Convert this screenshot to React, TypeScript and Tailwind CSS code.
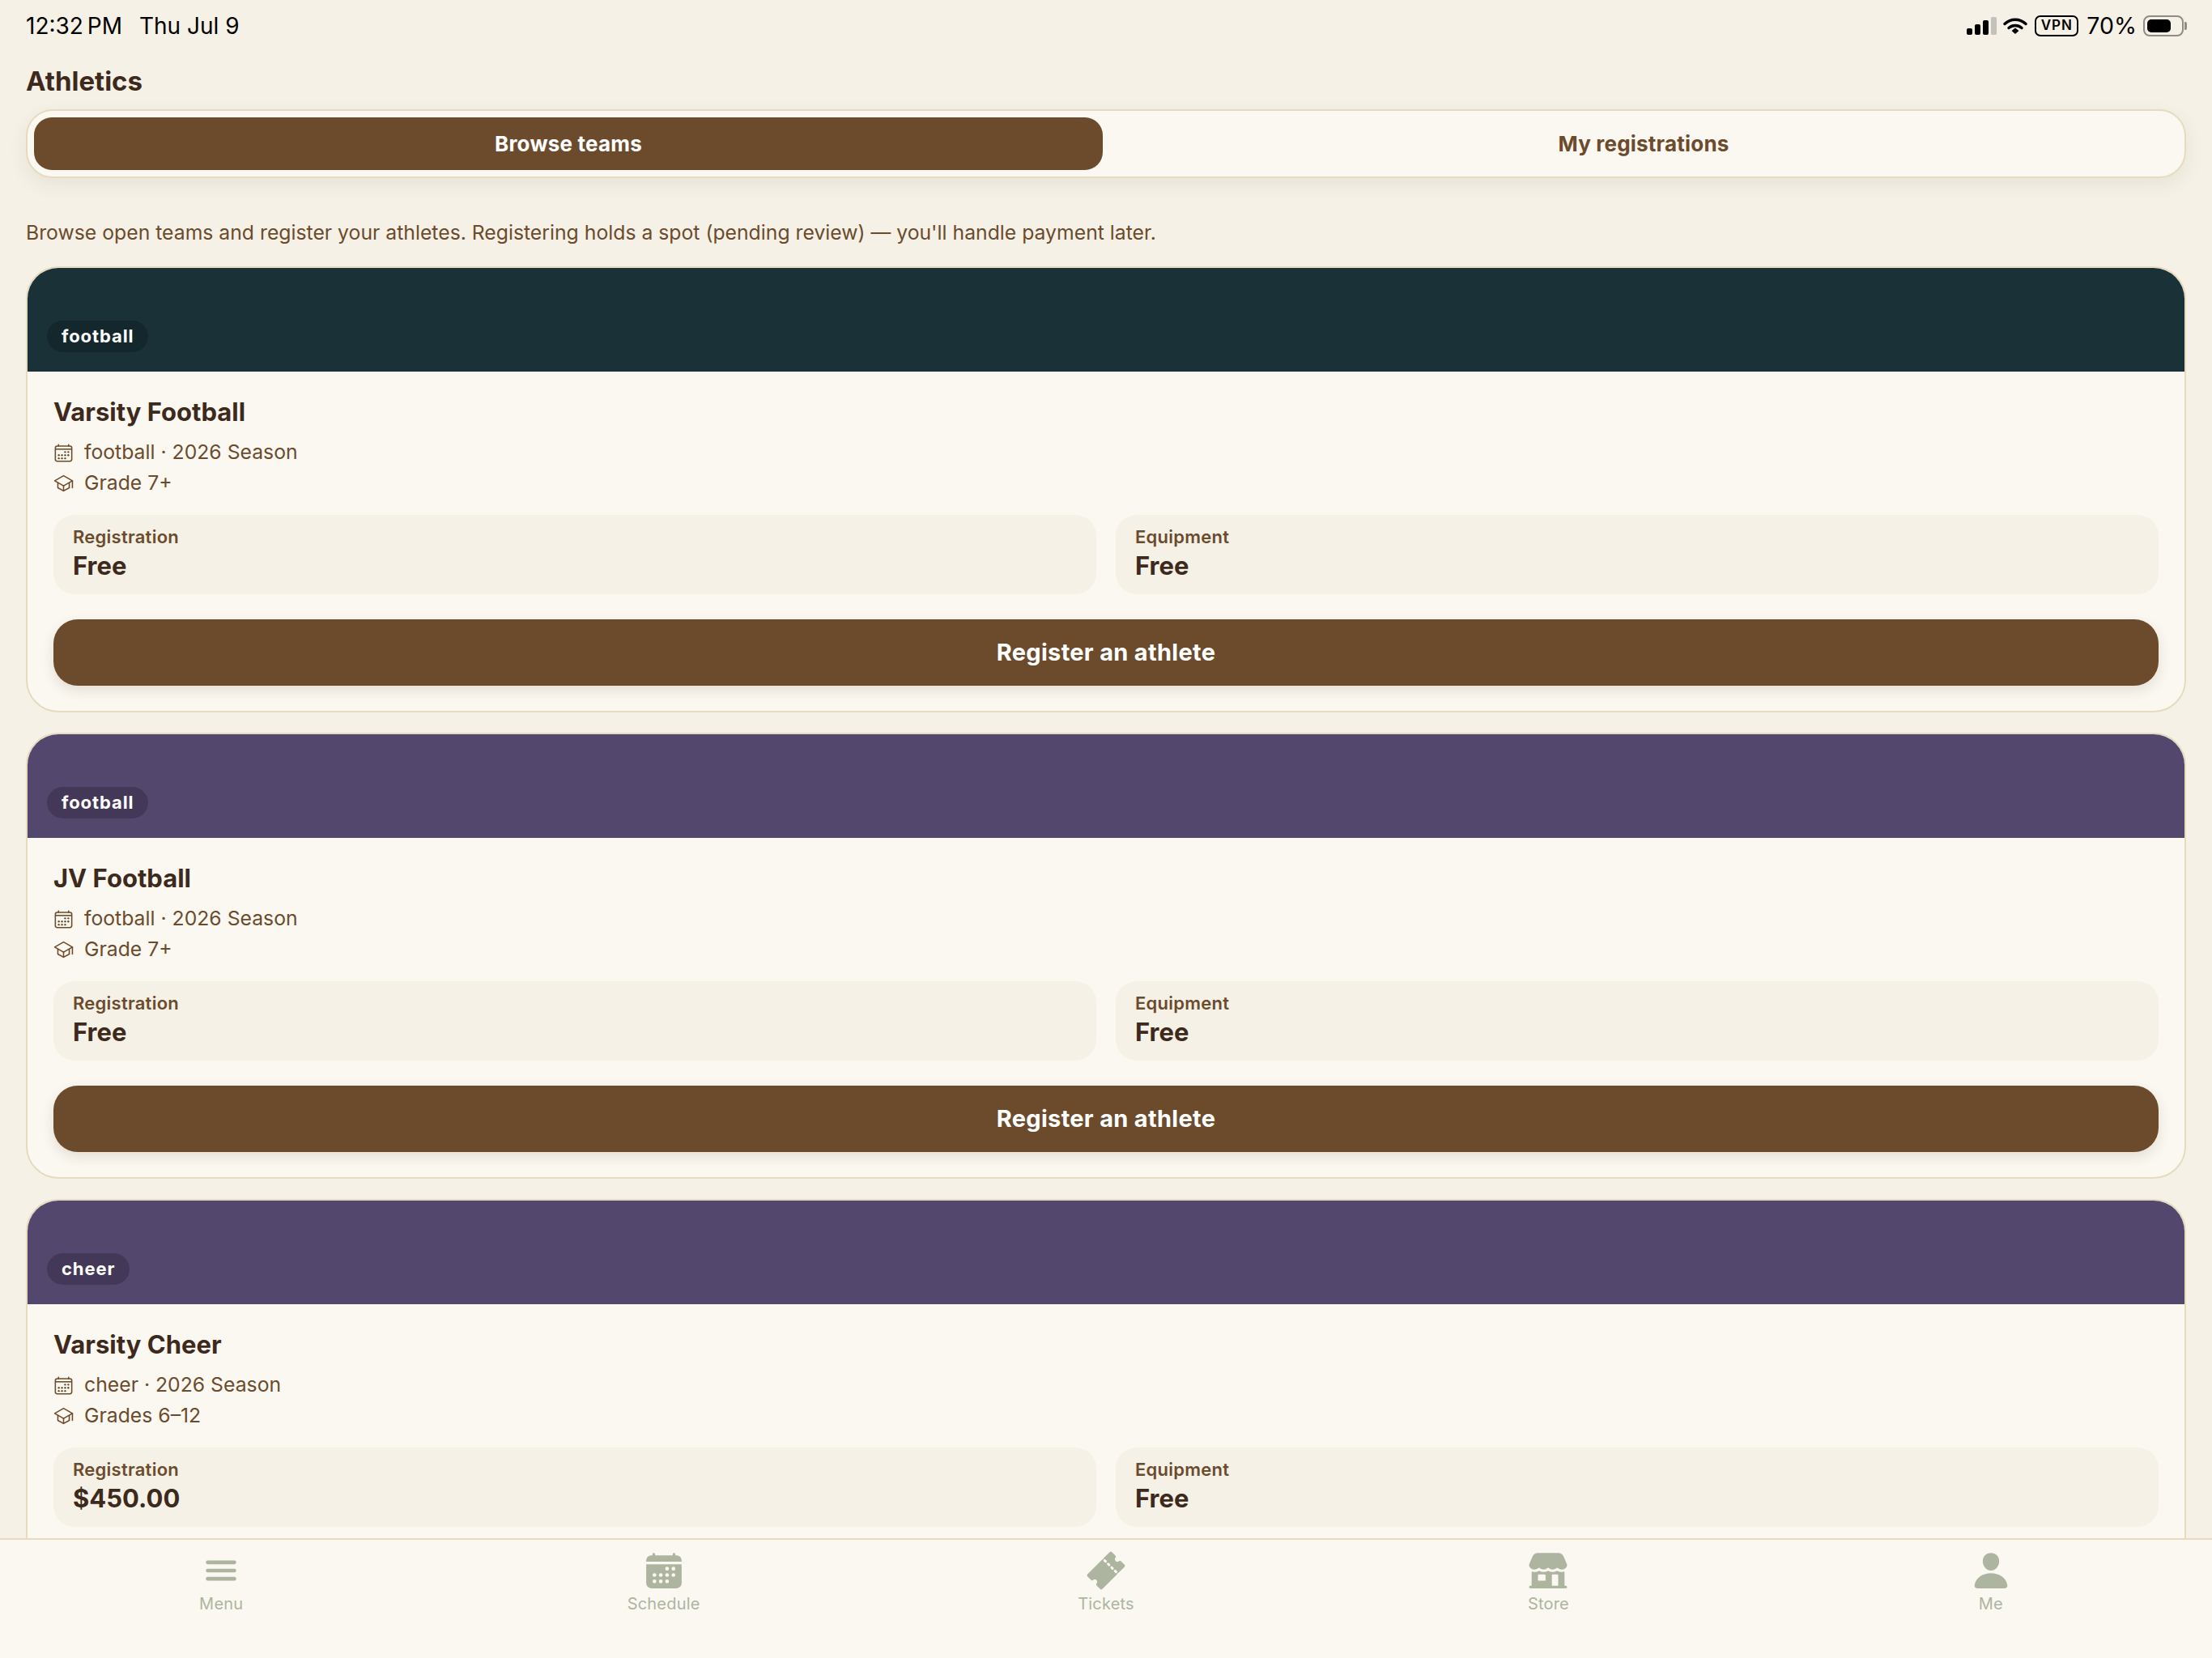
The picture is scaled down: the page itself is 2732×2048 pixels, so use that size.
import React from "react";
import { IoCalendarOutline, IoSchoolOutline, IoMenu, IoCalendar, IoTicket, IoStorefront, IoPerson } from "react-icons/io5";

type Team = { tag: string; color: string; name: string; season: string; grade: string; reg: string; eq: string; cta: boolean };

const teams: Team[] = [
  { tag: "football", color: "bg-[#1a3138]", name: "Varsity Football", season: "football · 2026 Season", grade: "Grade 7+", reg: "Free", eq: "Free", cta: true },
  { tag: "football", color: "bg-[#54476e]", name: "JV Football", season: "football · 2026 Season", grade: "Grade 7+", reg: "Free", eq: "Free", cta: true },
  { tag: "cheer", color: "bg-[#54476e]", name: "Varsity Cheer", season: "cheer · 2026 Season", grade: "Grades 6–12", reg: "$450.00", eq: "Free", cta: false },
];

function StatusIcons() {
  return (
    <div className="flex items-center text-black">
      <svg width="38" height="24" viewBox="0 0 38 24" className="mr-[8px]">
        <rect x="1" y="15" width="7" height="8" rx="2" fill="#000" />
        <rect x="11" y="10" width="7" height="13" rx="2" fill="#000" />
        <rect x="21" y="5" width="7" height="18" rx="2" fill="#000" />
        <rect x="31" y="1" width="7" height="22" rx="1.5" fill="#c4c1ba" />
      </svg>
      <svg width="30" height="22" viewBox="0 0 30 22" className="mr-[9px]">
        <path d="M2 8.5C9.5 1.5 20.5 1.5 28 8.5" fill="none" stroke="#000" strokeWidth="3.4" strokeLinecap="round" />
        <path d="M7 13.5C11.5 9.5 18.5 9.5 23 13.5" fill="none" stroke="#000" strokeWidth="3.4" strokeLinecap="round" />
        <path d="M10.5 17L15 13.6L19.5 17L15 21Z" fill="#000" />
      </svg>
      <div className="mr-[10px] flex h-[26px] w-[54px] items-center justify-center rounded-[7px] border-[2px] border-black font-['Inter',sans-serif] text-[17px] font-semibold tracking-[1px]">
        VPN
      </div>
      <span className="mr-[8px] font-['Inter',sans-serif] text-[28.5px] leading-none">70%</span>
      <div className="relative flex h-[26px] w-[50px] items-center rounded-[8px] border-[2px] border-[#8f8c85] p-[3px]">
        <div className="h-full w-[29px] rounded-[5px] bg-black" />
        <div className="absolute -right-[6px] top-[6px] h-[10px] w-[3px] rounded-r-[2px] bg-[#8f8c85]" />
      </div>
    </div>
  );
}

function Card({ team }: { team: Team }) {
  return (
    <div className="shrink-0 overflow-hidden rounded-[40px] border-[2px] border-[#e6dabf] bg-[#fbf8f1]">
      <div className={`flex h-[128px] items-end px-[24px] pb-[24px] ${team.color}`}>
        <span className="flex h-[39px] items-center rounded-full bg-black/20 px-[18px] text-[22px] font-bold tracking-[0.9px] text-white">{team.tag}</span>
      </div>
      <div className={`px-[32px] pt-[31px] ${team.cta ? "pb-[31px]" : "pb-[100px]"}`}>
        <h2 className="text-[31px] font-bold leading-[38px] text-[#3d2a1c]">{team.name}</h2>
        <div className="mt-[12px] flex h-[38px] items-center gap-[13px] text-[24.75px] text-[#6b4b2c]">
          <IoCalendarOutline className="h-[25px] w-[25px]" />
          <span>{team.season}</span>
        </div>
        <div className="flex h-[38px] items-center gap-[13px] text-[24.75px] text-[#6b4b2c]">
          <IoSchoolOutline className="h-[26px] w-[25px]" />
          <span>{team.grade}</span>
        </div>
        <div className="mt-[20px] grid grid-cols-2 gap-[24px]">
          {[{ l: "Registration", v: team.reg }, { l: "Equipment", v: team.eq }].map((s) => (
            <div key={s.l} className="h-[98px] rounded-[26px] bg-[#f5f1e6] px-[24px] pt-[12px]">
              <div className="text-[22px] font-semibold leading-[30px] tracking-[0.25px] text-[#6b4b2c]">{s.l}</div>
              <div className="mt-[1px] text-[31px] font-bold leading-[40px] text-[#3d2a1c]">{s.v}</div>
            </div>
          ))}
        </div>
        {team.cta && (
          <button className="mt-[31px] flex h-[82px] w-full items-center justify-center rounded-[30px] bg-[#6b4b2c] text-[29px] font-bold tracking-[0.3px] text-white shadow-[0_6px_16px_rgba(60,40,20,0.12)]">
            Register an athlete
          </button>
        )}
      </div>
    </div>
  );
}

const navItems = [
  { label: "Menu", Icon: IoMenu },
  { label: "Schedule", Icon: IoCalendar },
  { label: "Tickets", Icon: IoTicket },
  { label: "Store", Icon: IoStorefront },
  { label: "Me", Icon: IoPerson },
];

export default function App() {
  return (
    <div className="flex h-[2048px] w-[2732px] flex-col overflow-hidden bg-[#f5f1e6] font-['Inter',sans-serif]">
      <div className="flex h-[64px] shrink-0 items-center justify-between pl-[32px] pr-[35px]">
        <div className="flex gap-[21px] text-[28px] leading-none text-black">
          <span className="[word-spacing:-3px]">12:32 PM</span>
          <span>Thu Jul 9</span>
        </div>
        <StatusIcons />
      </div>
      <div className="flex min-h-0 flex-1 flex-col overflow-hidden px-[32px]">
        <h1 className="mt-[16px] text-[33px] font-bold leading-[40px] text-[#3d2a1c]">Athletics</h1>
        <div className="mt-[15px] flex h-[85px] shrink-0 gap-[8px] rounded-[33px] border-[2px] border-[#e6dabf] bg-[#fbf8f1] p-[8px] shadow-[0_8px_24px_rgba(60,40,20,0.07)]">
          <div className="flex flex-1 items-center justify-center rounded-[22px] bg-[#6b4b2c] text-[26px] font-bold tracking-[0.2px] text-white">Browse teams</div>
          <div className="flex flex-1 items-center justify-center text-[26px] font-bold tracking-[0.2px] text-[#6b4b2c]">My registrations</div>
        </div>
        <p className="mt-[50px] text-[24.75px] leading-[34px] text-[#6b4b2c]">
          Browse open teams and register your athletes. Registering holds a spot (pending review) — you'll handle payment later.
        </p>
        <div className="mt-[25px] flex flex-col gap-[25px]">
          {teams.map((t) => (
            <Card key={t.name} team={t} />
          ))}
        </div>
      </div>
      <nav className="flex h-[148px] shrink-0 border-t-[2px] border-[#e6dabf] bg-[#fbf8f1] pt-[13px]">
        {navItems.map(({ label, Icon }) => (
          <div key={label} className="flex flex-1 flex-col items-center text-[#adb5a0]">
            <Icon className="h-[50px] w-[50px]" />
            <span className="mt-[3px] text-[20px] leading-[26px] tracking-[0.2px]">{label}</span>
          </div>
        ))}
      </nav>
    </div>
  );
}
